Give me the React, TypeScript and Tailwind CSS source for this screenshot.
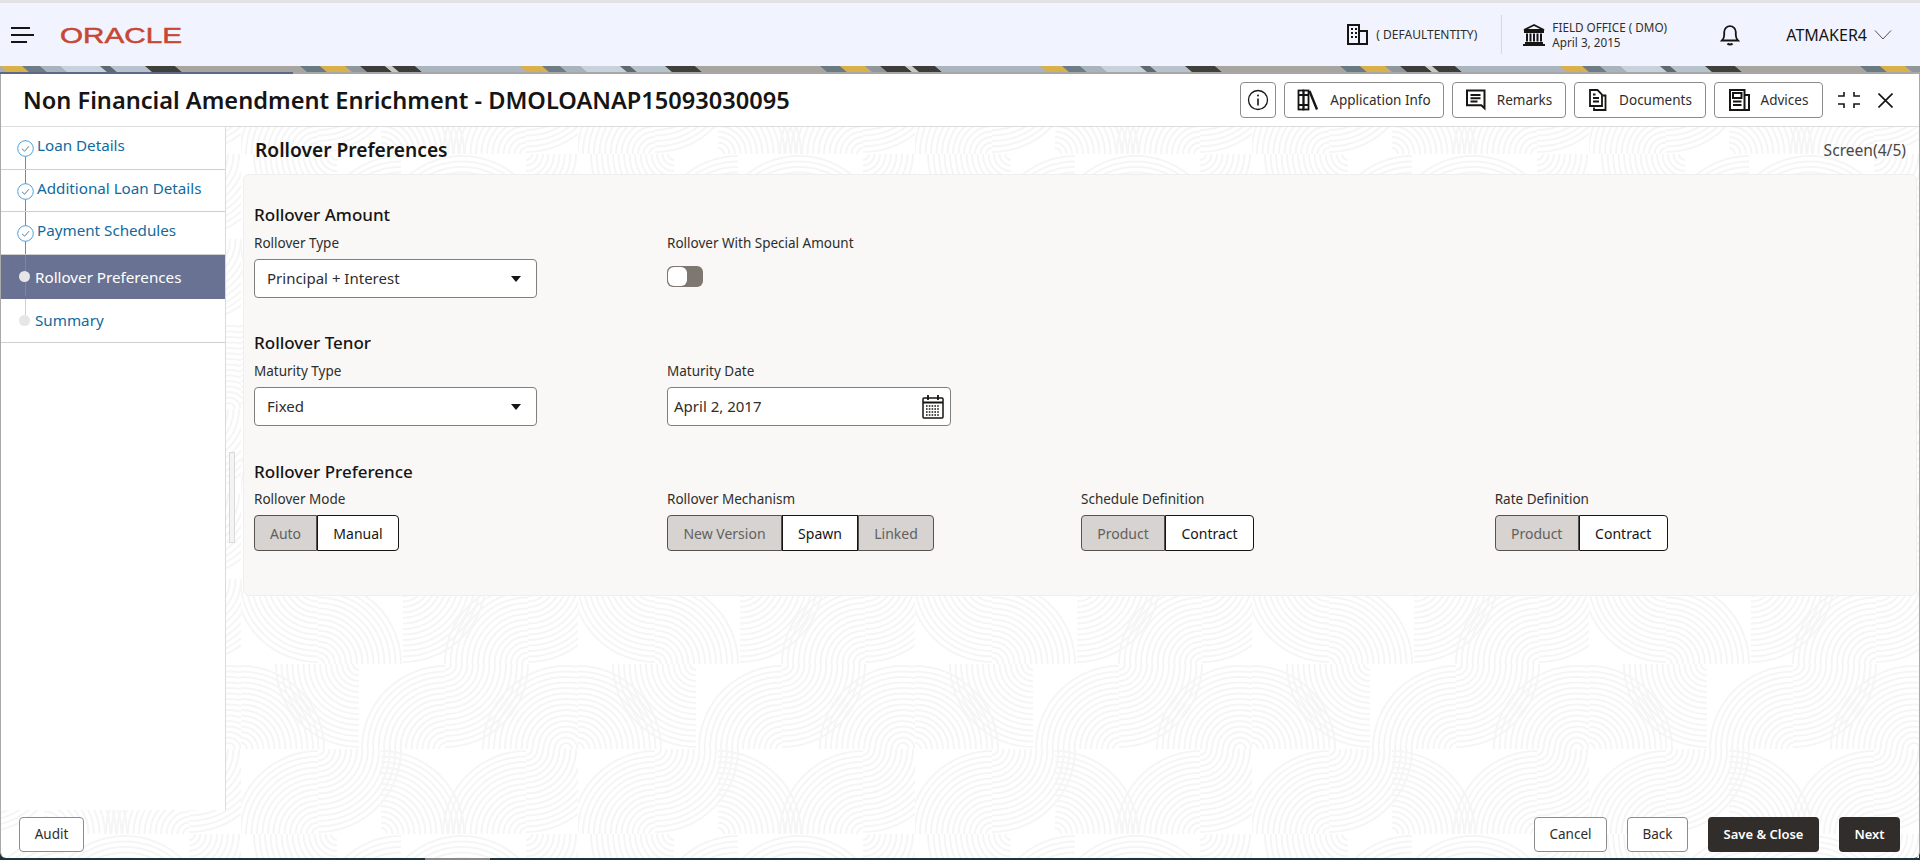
import React from "react";

const FONT = "font-['Noto_Sans',sans-serif]";

const quads: [number, number, string][] = [
  // row A
  [77, 0, "bl"], [77, 85, "tr"], [162, 0, "br"], [287, 85, "tl"], [287, 0, "br"],
  // row B
  [0, 170, "tr"], [118, 85, "bl"], [204, 170, "tl"], [204, 85, "br"], [325, 170, "tl"], [325, 170, "tr"],
  // row C
  [77, 255, "tl"], [77, 170, "br"], [140, 255, "tr"], [285, 255, "tl"], [285, 170, "br"],
  // row D
  [96, 255, "bl"], [160, 340, "tl"], [221, 340, "tl"], [221, 340, "tr"], [285, 255, "br"],
];

const arcPath = (cx: number, cy: number, q: string, r: number) => {
  if (q === "tl") return `M${cx - r} ${cy}A${r} ${r} 0 0 1 ${cx} ${cy - r}`;
  if (q === "tr") return `M${cx} ${cy - r}A${r} ${r} 0 0 1 ${cx + r} ${cy}`;
  if (q === "br") return `M${cx + r} ${cy}A${r} ${r} 0 0 1 ${cx} ${cy + r}`;
  return `M${cx} ${cy + r}A${r} ${r} 0 0 1 ${cx - r} ${cy}`;
};

const radii = [6, 11.5, 17, 22.5, 28, 33.5, 39, 44.5, 50, 55.5, 61, 66.5, 72, 77.5, 83];

// fingerprint arcs behind the form
const PatternBg = () => (
  <svg className="absolute inset-0 w-full h-full" aria-hidden="true">
    <defs>
      <pattern id="arcs" patternUnits="userSpaceOnUse" width="337" height="340" x="240" y="452">
        {quads.map(([cx, cy, q], i) => (
          <path
            key={i}
            d={radii.map((r) => arcPath(cx, cy, q, r)).join("")}
            fill="none"
            stroke="#f5f5f5"
            strokeWidth="2"
          />
        ))}
      </pattern>
    </defs>
    <rect width="100%" height="100%" fill="url(#arcs)" />
  </svg>
);

const stripes: [number, number, string][] = [
  [0, 22, "#d9b04a"], [22, 40, "#6e7c85"], [40, 60, "#a8b3bd"], [60, 100, "#c8d2dc"], [100, 110, "#5f6a70"],
  [110, 145, "#b8c2cd"], [145, 175, "#3f3f3c"], [175, 300, "#a8a5a0"], [300, 320, "#6a7a82"], [320, 345, "#d9b04a"],
  [345, 360, "#8f979b"], [360, 385, "#3d3c3a"], [385, 392, "#c9c9c6"], [392, 415, "#3d3c3a"], [415, 520, "#aab4be"],
];

const Banner = () => (
  <svg className="block w-full h-[6px] shrink-0" viewBox="0 0 1920 6" preserveAspectRatio="none" aria-hidden="true">
    <rect width="1920" height="6" fill="#a8aeb4" />
    {[0, 520, 1040, 1560].map((off) =>
      stripes.map(([a, b, c]) => (
        <polygon key={off + a} points={`${off + a},0 ${off + b},0 ${off + b + 7},6 ${off + a + 7},6`} fill={c} />
      ))
    )}
  </svg>
);

const IconEntity = () => (
  <svg width="21" height="21" viewBox="0 0 21 21" fill="none" stroke="#161513" strokeWidth="2">
    <rect x="1" y="1" width="11" height="19" />
    <path d="M12 7h8v13h-8M0 20h21" />
    <path d="M4 5h2M8 5h2M4 9h2M8 9h2M4 13h2M8 13h2" strokeWidth="2" />
  </svg>
);

const IconBank = () => (
  <svg width="24" height="22" viewBox="0 0 24 22" fill="none" stroke="#161513">
    <path d="M12 1 2 6h20z" strokeWidth="1.8" />
    <path d="M2 8h20M3 19h18M1 21h22" strokeWidth="1.8" />
    <path d="M5 9.5v8M8.5 9.5v8M12 9.5v8M15.5 9.5v8M19 9.5v8" strokeWidth="2" />
  </svg>
);

const IconBell = () => (
  <svg width="20" height="22" viewBox="0 0 20 22" fill="none" stroke="#161513" strokeWidth="1.8">
    <path d="M2 16.5h16c-1.6-1.6-2.2-3-2.2-5.5V8a5.8 5.8 0 0 0-11.6 0v3c0 2.5-.6 3.9-2.2 5.5z" />
    <path d="M7.5 19.5c1.2 1.4 3.8 1.4 5 0" strokeWidth="2" />
  </svg>
);

const IconInfo = () => (
  <svg width="22" height="22" viewBox="0 0 22 22" fill="none" stroke="#161513" strokeWidth="1.3">
    <circle cx="11" cy="11" r="9.5" />
    <path d="M11 9.5v7" strokeWidth="1.6" />
    <circle cx="11" cy="6.5" r="1" fill="#161513" stroke="none" />
  </svg>
);

const IconBooks = () => (
  <svg width="22" height="22" viewBox="0 0 22 22" fill="none" stroke="#161513" strokeWidth="1.8">
    <rect x="1.5" y="1.5" width="5" height="19" />
    <rect x="6.5" y="1.5" width="5" height="19" />
    <path d="M1.5 6h10M1.5 16h10" />
    <path d="m12.5 2 7.5 18.5" strokeWidth="2.4" />
  </svg>
);

const IconRemarks = () => (
  <svg width="20" height="22" viewBox="0 0 20 22" fill="none" stroke="#161513" strokeWidth="2">
    <path d="M1 1.5h17.5v17.8l-3.2-3H1z" />
    <path d="M4.5 6h10M4.5 9.2h10M4.5 12.5h7" />
  </svg>
);

const IconDocs = () => (
  <svg width="20" height="22" viewBox="0 0 20 22" fill="none" stroke="#161513" strokeWidth="1.8">
    <path d="M2 1h7.5L14 5.5V17H2z" />
    <path d="M5 9h6M5 12.5h6M5 5.5h2.5" />
    <path d="M15 6.5h2.5V21H6v-2.5" />
  </svg>
);

const IconAdvices = () => (
  <svg width="21" height="22" viewBox="0 0 21 22" fill="none" stroke="#161513" strokeWidth="2">
    <rect x="1" y="1" width="14.5" height="20" />
    <rect x="4" y="4" width="8.5" height="5" />
    <path d="M4 12.5h8.5M4 16h8.5M15.5 6H20v15h-4.5" />
  </svg>
);

const IconExpand = () => (
  <svg width="22" height="16" viewBox="0 0 22 16" fill="none" stroke="#161513" strokeWidth="1.6">
    <path d="M6 0v4H0M16 0v4h6M6 16v-4H0M16 16v-4h6" />
  </svg>
);

const IconClose = () => (
  <svg width="15" height="15" viewBox="0 0 15 15" fill="none" stroke="#161513" strokeWidth="1.6">
    <path d="m.5.5 14 14M14.5.5l-14 14" />
  </svg>
);

const IconCalendar = () => (
  <svg width="22" height="24" viewBox="0 0 22 24" fill="none" stroke="#161513">
    <rect x="1" y="3" width="20" height="20" rx="1" strokeWidth="1.5" />
    <path d="M1 7.5h20" strokeWidth="2" />
    <path d="M6 0v5M16 0v5" strokeWidth="1.8" />
    <path d="M4 11h14M4 14h14M4 17h14M4 20h14" strokeWidth="1.6" strokeDasharray="1.6 1.2" />
  </svg>
);

const IconCheck = () => (
  <svg width="17" height="17" viewBox="0 0 17 17" fill="#ffffff" stroke="#4aa0dc" strokeWidth="1">
    <circle cx="8.5" cy="8.5" r="7.8" />
    <path d="m5 8.8 2.6 2.4L12 6.2" fill="none" stroke="#5a7f9c" />
  </svg>
);

const Caret = () => <span className="w-0 h-0 border-x-[5px] border-x-transparent border-t-[6px] border-t-[#161513]" />;

const ToolButton = ({ icon, label, w }: { icon: React.ReactNode; label: string; w: string }) => (
  <button className={`${w} h-9 flex items-center justify-center gap-[11px] rounded border border-[#8d8d8d] bg-white text-[13.5px] text-[#2f2d2b]`}>
    {icon}
    {label}
  </button>
);

const steps = [
  { label: "Loan Details", line: "top-[13px] bottom-0", h: "h-[43px]" },
  { label: "Additional Loan Details", line: "top-0 bottom-0", h: "h-[42px]" },
  { label: "Payment Schedules", line: "top-0 bottom-0", h: "h-[43px]" },
];

const Sidebar = () => (
  <aside className="relative w-[225px] shrink-0 bg-white border-r border-[#d3dbe4] text-[15.2px] text-[#0f6a9e]">
    {steps.map((s) => (
      <div key={s.label} className={`${s.h} flex items-start pl-[16px] border-b border-[#cfcfcf]`}>
        <div className="relative w-[17px] h-full shrink-0">
          <div className={`absolute left-[7.5px] ${s.line} w-px bg-[#3f9ad6]`} />
          <div className="relative mt-[13px]"><IconCheck /></div>
        </div>
        <span className="ml-[3px] mt-[8px] leading-5">{s.label}</span>
      </div>
    ))}
    <div className="relative h-[44px] flex items-center pl-[34px] bg-[#6a7293] text-white">
      <div className="absolute left-[24px] top-0 h-[41px] w-px bg-[#3f9ad6]" />
      <div className="absolute left-[18px] top-[16px] w-[11px] h-[11px] rounded-full bg-[#e6e6e6]" />
      Rollover Preferences
    </div>
    <div className="relative h-[44px] flex items-center pl-[34px] border-b border-[#cfcfcf]">
      <div className="absolute left-[24px] top-0 h-[16px] w-px bg-[#d0d0d0]" />
      <div className="absolute left-[18px] top-[16px] w-[11px] h-[11px] rounded-full bg-[#e6e6e6]" />
      Summary
    </div>
  </aside>
);

const Label = ({ children }: { children: React.ReactNode }) => (
  <div className="h-5 leading-5 text-[13.5px] text-[#2f2d2b]">{children}</div>
);

const Heading = ({ children, className }: { children: React.ReactNode; className: string }) => (
  <div className={`h-6 leading-6 text-[17px] font-medium text-[#161513] ${className}`}>{children}</div>
);

const SelectBox = ({ value, h }: { value: string; h: string }) => (
  <div className={`${h} w-[283px] flex items-center justify-between pl-3 pr-[15px] bg-white rounded border border-[#7f7f7f] text-[15px] text-[#2f2d2b]`}>
    {value}
    <Caret />
  </div>
);

const Segmented = ({ items }: { items: { label: string; w: string; on?: boolean }[] }) => (
  <div className="flex h-9 w-fit text-[14px]">
    {items.map((it) => (
      <div
        key={it.label}
        className={
          it.on
            ? `${it.w} flex items-center justify-center border border-[#161513] bg-white text-[#161513] first:rounded-l last:rounded-r`
            : `${it.w} flex items-center justify-center border border-[#55524f] bg-[#d6d3d1] text-[#64605d] first:rounded-l last:rounded-r`
        }
      >
        {it.label}
      </div>
    ))}
  </div>
);

const FootButton = ({ label, w, dark }: { label: string; w: string; dark?: boolean }) => (
  <button
    className={
      dark
        ? `${w} h-[35px] rounded bg-[#312d2a] text-white text-[13px] font-semibold`
        : `${w} h-[35px] rounded border border-[#8d8d8d] bg-white text-[#2f2d2b] text-[13.5px]`
    }
  >
    {label}
  </button>
);

export default function App() {
  return (
    <div className={`${FONT} w-full h-[860px] flex flex-col overflow-hidden bg-[#22323a]`}>
      <div className="h-[3px] shrink-0 bg-[#e2e2e2]" />

      <header className="h-[63px] shrink-0 flex items-center bg-[#f1f4fe]">
        <div className="ml-[11px] w-[23px] flex flex-col gap-[5px]">
          <div className="h-[2px] w-[19px] bg-[#161513]" />
          <div className="h-[2px] w-[23px] bg-[#161513]" />
          <div className="h-[2px] w-[16px] bg-[#161513]" />
        </div>
        <svg className="ml-[25px]" width="124" height="26" viewBox="0 0 124 26" aria-label="Oracle">
          <text x="1" y="21" fontFamily="'Liberation Sans',sans-serif" fontSize="22.5" fill="#c74634" stroke="#c74634" strokeWidth="0.5" textLength="122" lengthAdjust="spacingAndGlyphs">ORACLE</text>
        </svg>
        <div className="ml-auto flex items-center text-[#2f2d2b]">
          <IconEntity />
          <span className="ml-2 w-[125px] text-[12px]">( DEFAULTENTITY)</span>
          <div className="w-px h-[39px] bg-[#d5d8e0]" />
          <div className="ml-[20px]"><IconBank /></div>
          <div className="ml-[6px] w-[168px] text-[11.7px] leading-[15px]">
            <div>FIELD OFFICE ( DMO)</div>
            <div>April 3, 2015</div>
          </div>
          <IconBell />
          <span className="ml-[46px] text-[16px] text-[#161513]">ATMAKER4</span>
          <svg className="ml-[7px] mr-[28px]" width="18" height="10" viewBox="0 0 18 10" fill="none" stroke="#55524f">
            <path d="m1 .5 8 8.5 8-8.5" />
          </svg>
        </div>
      </header>

      <Banner />

      <div className="h-[2px] shrink-0 flex bg-[#a8a8a8]">
        <div className="w-[293px] bg-[#5d6788]" />
      </div>

      <div className="h-[784px] shrink-0 flex flex-col bg-white rounded-b-md border-x border-[#a9a9a9]">
        <div className="h-[53px] shrink-0 flex items-center border-b border-[#dcdcdc] pl-[22px] pr-[26px]">
          <h1 className="mt-[2px] text-[23.6px] font-semibold text-[#161513]">Non Financial Amendment Enrichment - DMOLOANAP15093030095</h1>
          <div className="ml-auto flex items-center gap-2">
            <button className="w-9 h-9 flex items-center justify-center rounded border border-[#8d8d8d]"><IconInfo /></button>
            <ToolButton icon={<IconBooks />} label="Application Info" w="w-[160px]" />
            <ToolButton icon={<IconRemarks />} label="Remarks" w="w-[114px]" />
            <ToolButton icon={<IconDocs />} label="Documents" w="w-[132px]" />
            <ToolButton icon={<IconAdvices />} label="Advices" w="w-[109px]" />
            <div className="ml-[7px]"><IconExpand /></div>
            <div className="ml-[10px]"><IconClose /></div>
          </div>
        </div>

        <div className="relative flex-1 flex flex-col">
          <PatternBg />
          <div className="relative h-[683px] flex">
            <Sidebar />
            <main className="relative flex-1 pl-[17px] pr-[2px]">
              <div className="absolute left-[3px] top-[325px] w-[6px] h-[91px] bg-[#f4f4f4] border border-[#d9d9d9]" />
              <div className="h-[47px] flex items-center justify-between pl-[12px] pr-[11px]">
                <span className="text-[19.2px] font-semibold text-[#161513]">Rollover Preferences</span>
                <span className="text-[15.6px] text-[#4a4744]">Screen(4/5)</span>
              </div>
              <div className="h-[422px] pl-[10px] pt-[28px] bg-[#f9f8f6] border border-[#efefef] rounded-md">
                <Heading className="">Rollover Amount</Heading>
                <div className="mt-[6px] grid grid-cols-[413px_414px_413.7px_1fr]">
                  <div>
                    <Label>Rollover Type</Label>
                    <div className="mt-[6px]"><SelectBox value="Principal + Interest" h="h-[39px]" /></div>
                  </div>
                  <div>
                    <Label>Rollover With Special Amount</Label>
                    <div className="mt-[13px] w-9 h-[21px] flex rounded-md bg-[#7d7770] p-px">
                      <div className="w-[19px] h-[19px] rounded-md bg-white" />
                    </div>
                  </div>
                </div>

                <Heading className="mt-[33px]">Rollover Tenor</Heading>
                <div className="mt-[6px] grid grid-cols-[413px_414px_413.7px_1fr]">
                  <div>
                    <Label>Maturity Type</Label>
                    <div className="mt-[6px]"><SelectBox value="Fixed" h="h-[39px]" /></div>
                  </div>
                  <div>
                    <Label>Maturity Date</Label>
                    <div className="mt-[6px] w-[284px] h-[39px] flex items-center justify-between pl-[6px] pr-[6px] bg-white rounded border border-[#7f7f7f] text-[15px] text-[#2f2d2b]">
                      April 2, 2017
                      <IconCalendar />
                    </div>
                  </div>
                </div>

                <Heading className="mt-[34px]">Rollover Preference</Heading>
                <div className="mt-[5px] grid grid-cols-[413px_414px_413.7px_1fr]">
                  <div>
                    <Label>Rollover Mode</Label>
                    <div className="mt-[6px]">
                      <Segmented items={[{ label: "Auto", w: "w-[63px]" }, { label: "Manual", w: "w-[82px]", on: true }]} />
                    </div>
                  </div>
                  <div>
                    <Label>Rollover Mechanism</Label>
                    <div className="mt-[6px]">
                      <Segmented items={[{ label: "New Version", w: "w-[115px]" }, { label: "Spawn", w: "w-[76px]", on: true }, { label: "Linked", w: "w-[76px]" }]} />
                    </div>
                  </div>
                  <div>
                    <Label>Schedule Definition</Label>
                    <div className="mt-[6px]">
                      <Segmented items={[{ label: "Product", w: "w-[84px]" }, { label: "Contract", w: "w-[89px]", on: true }]} />
                    </div>
                  </div>
                  <div>
                    <Label>Rate Definition</Label>
                    <div className="mt-[6px]">
                      <Segmented items={[{ label: "Product", w: "w-[84px]" }, { label: "Contract", w: "w-[89px]", on: true }]} />
                    </div>
                  </div>
                </div>
              </div>
            </main>
          </div>

          <div className="relative flex-1 flex items-start pt-[7px] pl-[18px] pr-[19px]">
            <FootButton label="Audit" w="w-[65px]" />
            <div className="ml-auto flex gap-5">
              <FootButton label="Cancel" w="w-[73px]" />
              <FootButton label="Back" w="w-[61px]" />
              <FootButton label="Save & Close" w="w-[111px]" dark />
              <FootButton label="Next" w="w-[61px]" dark />
            </div>
          </div>
        </div>
      </div>

      <div className="h-[2px] shrink-0 ml-[425px] w-[65px] bg-[#8a8a8a]" />
    </div>
  );
}
